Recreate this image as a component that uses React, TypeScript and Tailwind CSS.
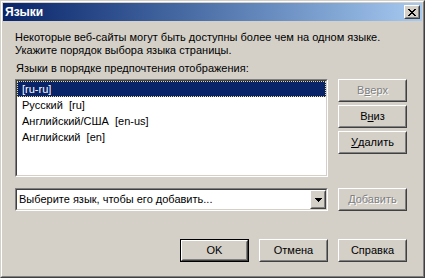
import React, { useState } from 'react';

// Win2000-ish 3D borders
const raised =
  'border border-t-white border-l-white border-b-[#404040] border-r-[#404040]';
const raisedInner =
  'border border-t-[#d4d0c8] border-l-[#d4d0c8] border-b-[#808080] border-r-[#808080]';
const sunken =
  'border border-t-[#808080] border-l-[#808080] border-b-white border-r-white';
const sunkenInner =
  'border border-t-[#404040] border-l-[#404040] border-b-[#d4d0c8] border-r-[#d4d0c8]';

const LANGUAGES = [
  '[ru-ru]',
  'Русский  [ru]',
  'Английский/США  [en-us]',
  'Английский  [en]'
];

const Button: React.FC<{
  children: React.ReactNode;
  disabled?: boolean;
  isDefault?: boolean;
}> = ({ children, disabled, isDefault }) => {
  const face = (
    <div className={`${raised} flex-1 flex`}>
      <div
        className={`${raisedInner} flex-1 flex items-center justify-center ${
          disabled ? 'text-[#808080] [text-shadow:1px_1px_0_#fff]' : 'text-black'
        }`}
      >
        {children}
      </div>
    </div>
  );

  if (isDefault) {
    return <div className="w-[69px] h-[23px] flex border border-black">{face}</div>;
  }
  return <div className="w-[69px] h-[23px] flex">{face}</div>;
};

const App: React.FC = () => {
  const [selected, setSelected] = useState(0);

  return (
    <div
      className="w-[425px] h-[278px] text-[11px] leading-[13px] text-black"
      style={{ fontFamily: '"Liberation Sans", Arial, sans-serif' }}
    >
      {/* Window frame */}
      <div className="w-full h-full border border-t-[#d4d0c8] border-l-[#d4d0c8] border-b-[#404040] border-r-[#404040] flex">
        <div className="flex-1 border border-t-white border-l-white border-b-[#808080] border-r-[#808080] bg-[#d4d0c8] p-px flex flex-col">
          {/* Title bar */}
          <div className="h-[18px] bg-gradient-to-r from-[#0a246a] to-[#a6caf0] flex items-center justify-between pl-[2px] pr-[2px]">
            <span className="text-white font-bold text-[12px] leading-[14px]">Языки</span>
            <div className={`${raised} w-[16px] h-[14px] flex bg-[#d4d0c8]`}>
              <div className={`${raisedInner} flex-1 flex items-center justify-center`}>
                <svg width="8" height="7" viewBox="0 0 8 7" shapeRendering="crispEdges">
                  <path
                    d="M0 0h2v1h-2zM6 0h2v1h-2zM1 1h2v1h-2zM5 1h2v1h-2zM2 2h4v1h-4zM3 3h2v1h-2zM2 4h4v1h-4zM1 5h2v1h-2zM5 5h2v1h-2zM0 6h2v1h-2zM6 6h2v1h-2z"
                    fill="#000"
                  />
                </svg>
              </div>
            </div>
          </div>

          {/* Body */}
          <div className="flex-1 flex flex-col pl-[12px] pr-[15px] pt-[10px] pb-[13px]">
            <p>
              Некоторые веб-сайты могут быть доступны более чем на одном языке.
              <br />
              Укажите порядок выбора языка страницы.
            </p>

            <div className="mt-[5px] pl-px">Языки в порядке предпочтения отображения:</div>

            <div className="mt-[4px] flex gap-[10px]">
              {/* Language list */}
              <div className={`${sunken} w-[313px] h-[98px] flex`}>
                <div className={`${sunkenInner} flex-1 bg-white flex flex-col`}>
                  {LANGUAGES.map((lang, i) => (
                    <div
                      key={lang}
                      onClick={() => setSelected(i)}
                      className={`h-[16px] flex items-center pl-[4px] whitespace-pre border border-dotted ${
                        selected === i
                          ? 'bg-[#0a246a] text-white border-[#e8dc8c]'
                          : 'border-transparent'
                      }`}
                    >
                      {lang}
                    </div>
                  ))}
                </div>
              </div>

              {/* Side buttons */}
              <div className="flex flex-col gap-[3px]">
                <Button disabled>
                  В<span className="underline">в</span>ерх
                </Button>
                <Button>
                  В<span className="underline">н</span>из
                </Button>
                <Button>
                  <span className="underline">У</span>далить
                </Button>
              </div>
            </div>

            {/* Add language */}
            <div className="mt-[11px] flex items-center gap-[10px]">
              <div className={`${sunken} w-[313px] h-[23px] flex`}>
                <div className={`${sunkenInner} flex-1 bg-white flex items-center`}>
                  <span className="flex-1 pl-[2px] truncate">Выберите язык, чтобы его добавить...</span>
                  <div className={`${raised} w-[16px] h-full flex bg-[#d4d0c8]`}>
                    <div className={`${raisedInner} flex-1 flex items-center justify-center`}>
                      <svg width="7" height="4" viewBox="0 0 7 4" shapeRendering="crispEdges">
                        <path d="M0 0h7v1h-7zM1 1h5v1h-5zM2 2h3v1h-3zM3 3h1v1h-1z" fill="#000" />
                      </svg>
                    </div>
                  </div>
                </div>
              </div>
              <Button disabled>
                <span className="underline">Д</span>обавить
              </Button>
            </div>

            {/* Dialog buttons */}
            <div className="mt-auto flex justify-end gap-[10px]">
              <Button isDefault>OK</Button>
              <Button>Отмена</Button>
              <Button>Справка</Button>
            </div>
          </div>
        </div>
      </div>
    </div>
  );
};

export default App;
